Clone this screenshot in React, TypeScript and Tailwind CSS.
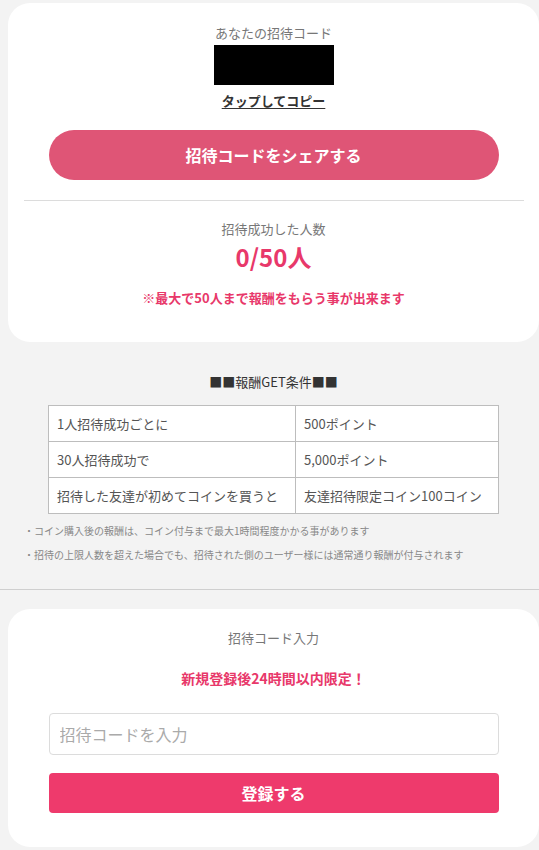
import { useState } from "react";

const FONT = '"Noto Sans CJK JP", "Noto Sans", sans-serif';

const ROWS = [
  ["1人招待成功ごとに", "500ポイント"],
  ["30人招待成功で", "5,000ポイント"],
  ["招待した友達が初めてコインを買うと", "友達招待限定コイン100コイン"],
];

export default function App() {
  const [code, setCode] = useState("");

  return (
    <div className="min-h-[850px] bg-[#f3f3f3] pt-[3px] overflow-hidden" style={{ fontFamily: FONT }}>
      {/* Invite card */}
      <div className="ml-2 mr-0 bg-white rounded-[22px] pt-[20px] pb-[35px] px-4 flex flex-col items-center">
        <div className="text-[13px] leading-[20px] text-[#777]">あなたの招待コード</div>
        <div className="mt-[2px] w-[120px] h-[40px] bg-black" />
        <button className="mt-[6px] text-[13px] leading-[20px] font-bold text-[#333] underline underline-offset-2">
          タップしてコピー
        </button>
        <button className="mt-[19px] w-[450px] h-[50px] rounded-full bg-[#df5576] text-white text-[16px] font-bold">
          招待コードをシェアする
        </button>
        <div className="mt-[20px] w-[500px] h-px bg-[#dcdcdc]" />
        <div className="mt-[18px] text-[13px] leading-[20px] text-[#777]">招待成功した人数</div>
        <div className="mt-[2px] text-[24px] leading-[32px] font-bold text-[#e8386a]">0/50人</div>
        <div className="mt-[16px] text-[13px] leading-[18px] font-bold text-[#e8386a]">
          ※最大で50人まで報酬をもらう事が出来ます
        </div>
      </div>

      {/* Reward conditions */}
      <div className="pt-[31px] pl-2 flex flex-col items-center">
        <div className="text-[13px] leading-[18px] text-[#333]">■■報酬GET条件■■</div>
        <table className="mt-[14px] w-[451px] border-collapse bg-white text-[13px] text-[#555]">
          <tbody>
            {ROWS.map(r => (
              <tr key={r[0]} className="h-[36px]">
                <td className="border border-[#bdbdbd] pl-[8px] w-[247px]">{r[0]}</td>
                <td className="border border-[#bdbdbd] pl-[8px]">{r[1]}</td>
              </tr>
            ))}
          </tbody>
        </table>
      </div>
      <div className="pl-[24px] pt-[10px] text-[10px] leading-[14px] text-[#888] flex flex-col gap-[10px]">
        <div>・コイン購入後の報酬は、コイン付与まで最大1時間程度かかる事があります</div>
        <div>・招待の上限人数を超えた場合でも、招待された側のユーザー様には通常通り報酬が付与されます</div>
      </div>
      <div className="mt-[27px] h-px bg-[#cfcfcf]" />

      {/* Code entry card */}
      <div className="mt-[19px] ml-2 bg-white rounded-[22px] pt-[19px] pb-[34px] flex flex-col items-center">
        <div className="text-[13px] leading-[20px] text-[#777]">招待コード入力</div>
        <div className="mt-[20px] text-[14px] leading-[20px] font-bold text-[#e8386a]">新規登録後24時間以内限定！</div>
        <input
          value={code}
          onChange={e => setCode(e.target.value)}
          placeholder="招待コードを入力"
          className="mt-[25px] w-[450px] h-[42px] px-[10px] rounded-[4px] border border-[#dcdcdc] text-[16px] text-[#333] placeholder:text-[#aaa] outline-none"
          style={{ fontFamily: FONT }}
        />
        <button className="mt-[18px] w-[450px] h-[40px] rounded-[4px] bg-[#ee3a6c] text-white text-[16px] font-bold">
          登録する
        </button>
      </div>
    </div>
  );
}
